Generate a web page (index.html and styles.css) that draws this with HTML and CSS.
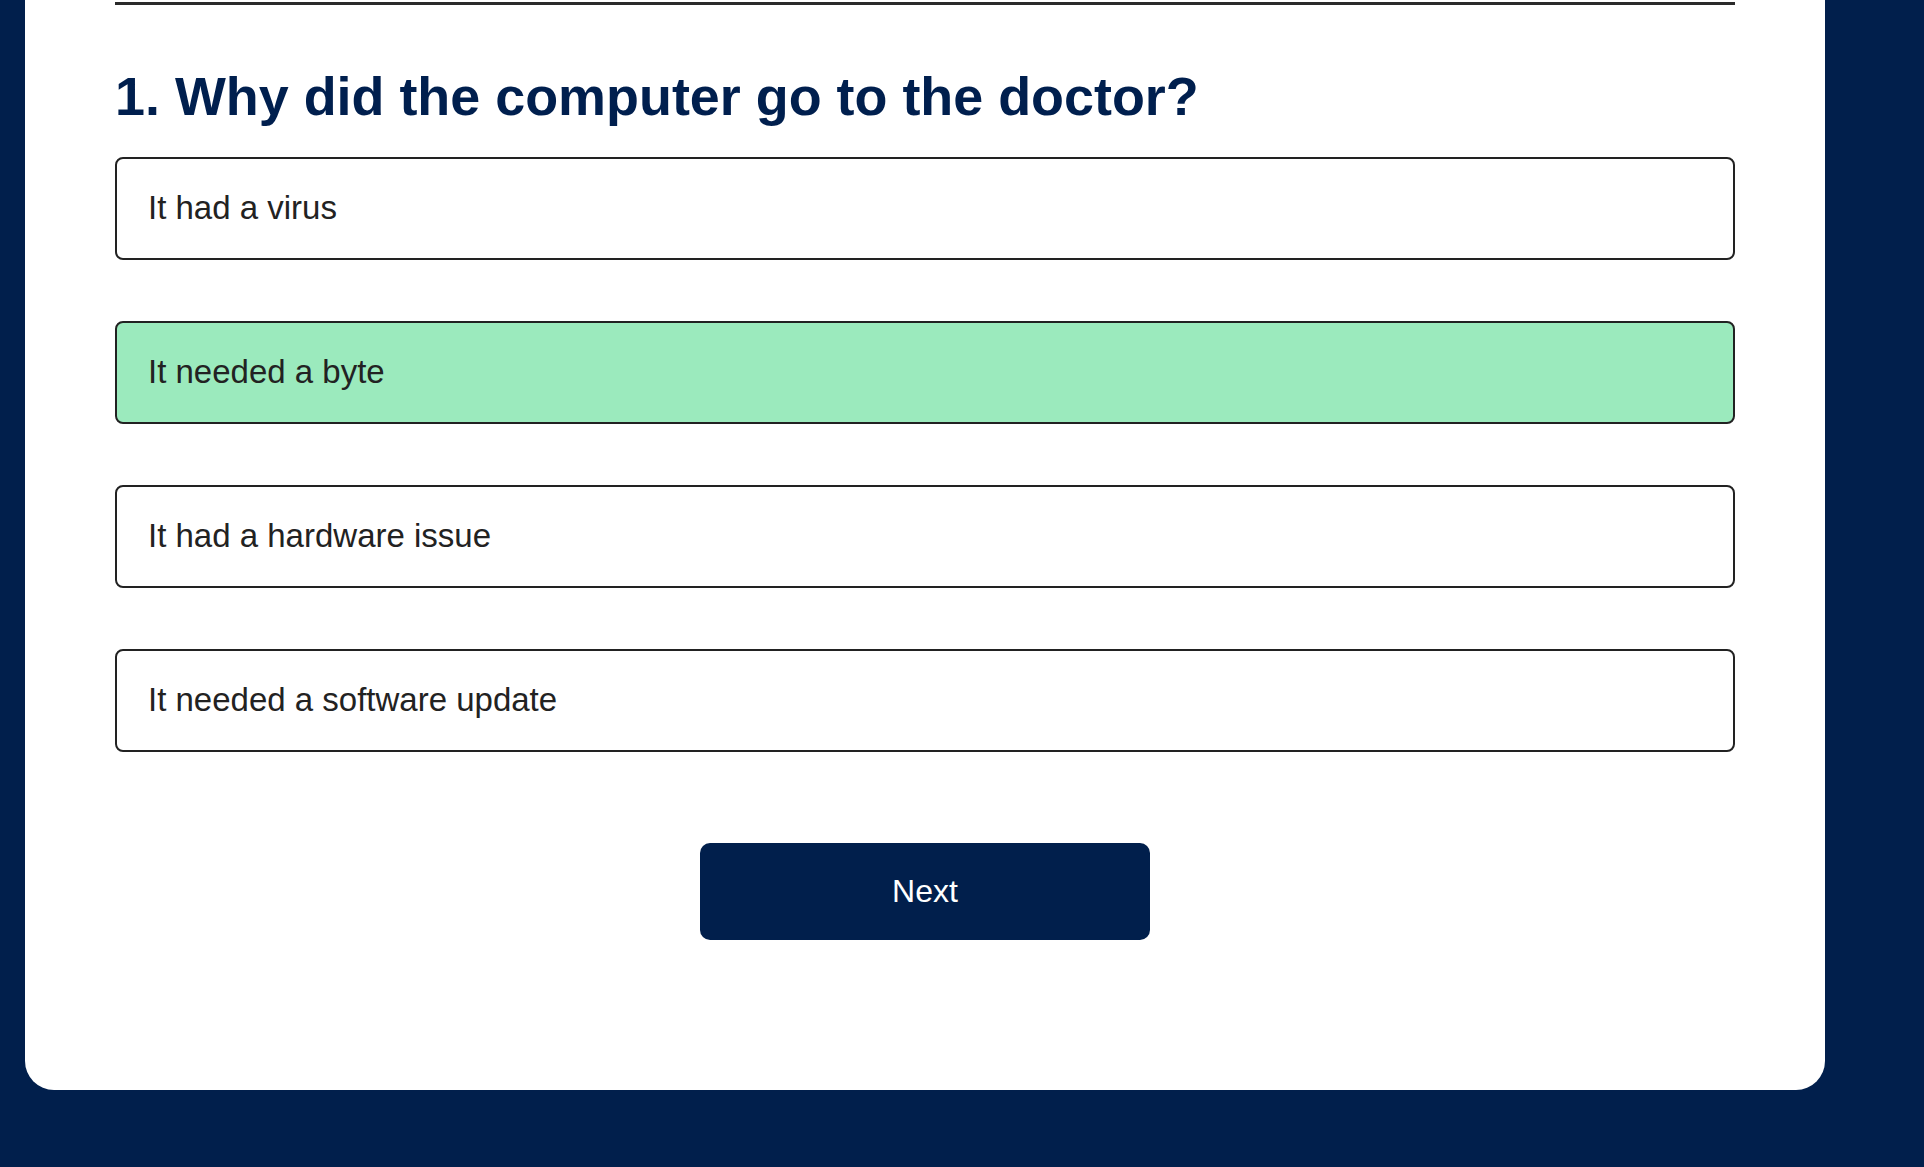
FILE: index.html
```html
<!DOCTYPE html>
<html lang="en">
<head>
<meta charset="utf-8">
<title>Quiz</title>
<link rel="stylesheet" href="styles.css">
</head>
<body>
<div class="page">
  <main class="card">
    <div class="divider"></div>
    <h1 class="question">1. Why did the computer go to the doctor?</h1>
    <div class="options">
      <button class="option">It had a virus</button>
      <button class="option option--selected">It needed a byte</button>
      <button class="option">It had a hardware issue</button>
      <button class="option">It needed a software update</button>
    </div>
    <div class="actions">
      <button class="next">Next</button>
    </div>
  </main>
</div>
</body>
</html>
```

FILE: styles.css
```css
html, body {
  margin: 0;
  padding: 0;
}

body {
  background: #011f4c;
  font-family: "Liberation Sans", Arial, Helvetica, sans-serif;
  min-height: 1167px;
}

.page {
  padding-left: 25px;
}

.card {
  width: 1800px;
  box-sizing: border-box;
  background: #ffffff;
  padding: 2px 90px 150px;
  border-radius: 0 0 29px 29px;
}

.divider {
  height: 3px;
  background: #2a2a2a;
}

.question {
  margin: 61px 0 29px;
  font-size: 53.9px;
  line-height: 1.15;
  font-weight: bold;
  color: #001f4e;
}

.options {
  display: flex;
  flex-direction: column;
  gap: 61px;
}

.option {
  display: block;
  width: 100%;
  box-sizing: border-box;
  height: 103px;
  padding: 30px 31px 31px;
  border: 2px solid #222222;
  border-radius: 8px;
  background: #ffffff;
  font-family: inherit;
  font-size: 33px;
  line-height: 38px;
  color: #222222;
  text-align: left;
}

.option--selected {
  background: #9beabd;
}

.actions {
  display: flex;
  justify-content: center;
  margin-top: 91px;
}

.next {
  width: 450px;
  height: 97px;
  border: none;
  border-radius: 10px;
  background: #011f4c;
  color: #ffffff;
  font-family: inherit;
  font-size: 32px;
  line-height: 37px;
  padding: 0;
}
```
